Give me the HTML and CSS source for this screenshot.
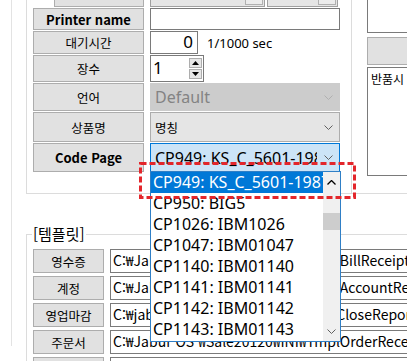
FILE: index.html
```html
<!DOCTYPE html>
<html lang="ko">
<head>
    <meta charset="UTF-8">
    <title>Printer Settings</title>
    <link rel="stylesheet" href="styles.css">
</head>
<body>
    <div class="screen">
        <div class="frame">
            <div class="top">
                <div class="upper">
                    <div class="row h-top">
                        <div class="label stub"></div>
                        <div class="pair">
                            <div class="mini-combo wide"><span class="mini-btn"></span></div>
                            <div class="mini-combo narrow"><span class="mini-btn"></span></div>
                        </div>
                    </div>
                    <div class="row h-printer">
                        <div class="label bold">Printer name</div>
                        <div class="textbox"></div>
                    </div>
                    <div class="row h-wait">
                        <div class="label">대기시간</div>
                        <div class="textbox num">0</div>
                        <span class="unit">1/1000 sec</span>
                    </div>
                    <div class="row h-count">
                        <div class="label">장수</div>
                        <div class="updown">
                            <span class="updown-value">1</span>
                            <div class="spins">
                                <span class="spin"><svg width="7" height="4" viewBox="0 0 7 4"><polygon points="0,4 3.5,0 7,4" fill="#000"/></svg></span>
                                <span class="spin"><svg width="7" height="4" viewBox="0 0 7 4"><polygon points="0,0 7,0 3.5,4" fill="#000"/></svg></span>
                            </div>
                        </div>
                    </div>
                    <div class="row h-lang">
                        <div class="label">언어</div>
                        <div class="combo disabled">
                            <span class="combo-text">Default</span>
                            <svg class="chevron" width="9" height="5" viewBox="0 0 9 5"><polyline points="0.5,0.5 4.5,4.5 8.5,0.5" fill="none" stroke="#b0b0b0" stroke-width="1"/></svg>
                        </div>
                    </div>
                    <div class="row h-name">
                        <div class="label">상품명</div>
                        <div class="combo plain">
                            <span class="combo-text">명칭</span>
                            <svg class="chevron" width="9" height="5" viewBox="0 0 9 5"><polyline points="0.5,0.5 4.5,4.5 8.5,0.5" fill="none" stroke="#606060" stroke-width="1"/></svg>
                        </div>
                    </div>
                    <div class="row h-code">
                        <div class="label bold">Code Page</div>
                        <div class="combo focused">
                            <span class="combo-text">CP949: KS_C_5601-1987</span>
                            <svg class="chevron" width="9" height="5" viewBox="0 0 9 5"><polyline points="0.5,0.5 4.5,4.5 8.5,0.5" fill="none" stroke="#606060" stroke-width="1"/></svg>
                        </div>
                    </div>
                </div>
                <div class="side">
                    <div class="side-box"></div>
                    <div class="side-btn"></div>
                    <div class="side-memo">반품시</div>
                </div>
            </div>

            <div class="template">
                <div class="legend">[템플릿]</div>
                <div class="tpl-rows">
                    <div class="tpl-row">
                        <div class="label tpl-label">영수증</div>
                        <div class="textbox path">C:₩Jabur OS ₩Sale20120₩INI₩TmplBillReceiptDesign.ini</div>
                    </div>
                    <div class="tpl-row">
                        <div class="label tpl-label">계정</div>
                        <div class="textbox path">C:₩Jabur OS ₩Sale20120₩INI₩TmplAccountReceipt.ini</div>
                    </div>
                    <div class="tpl-row">
                        <div class="label tpl-label">영업마감</div>
                        <div class="textbox path">C:₩jabur OS ₩Sale20120₩INI₩TmplCloseReport.ini</div>
                    </div>
                    <div class="tpl-row">
                        <div class="label tpl-label">주문서</div>
                        <div class="textbox path">C:₩Jabur OS ₩Sale20120₩INI₩TmplOrderReceipt.ini</div>
                    </div>
                    <div class="tpl-row">
                        <div class="label tpl-label"></div>
                        <div class="textbox path"></div>
                    </div>
                </div>
            </div>
        </div>

        <!-- open code page list -->
        <div class="dropdown">
            <div class="list">
                <div class="item selected">CP949: KS_C_5601-1987</div>
                <div class="item">CP950: BIG5</div>
                <div class="item">CP1026: IBM1026</div>
                <div class="item">CP1047: IBM01047</div>
                <div class="item">CP1140: IBM01140</div>
                <div class="item">CP1141: IBM01141</div>
                <div class="item">CP1142: IBM01142</div>
                <div class="item">CP1143: IBM01143</div>
            </div>
            <div class="scrollbar">
                <span class="sb-btn"><svg width="9" height="5" viewBox="0 0 9 5"><polyline points="0.5,4.5 4.5,0.5 8.5,4.5" fill="none" stroke="#000" stroke-width="1.3"/></svg></span>
                <span class="thumb"></span>
                <span class="sb-fill"></span>
                <span class="sb-btn"><svg width="9" height="5" viewBox="0 0 9 5"><polyline points="0.5,0.5 4.5,4.5 8.5,0.5" fill="none" stroke="#606060" stroke-width="1"/></svg></span>
            </div>
        </div>

        <!-- highlight marker -->
        <svg class="marker" width="217" height="37" viewBox="0 0 217 37">
            <rect x="1.5" y="1.5" width="214" height="34" fill="none" stroke="#e3262b" stroke-width="3" stroke-dasharray="6 3"/>
        </svg>
    </div>
</body>
</html>
```

FILE: styles.css
```css
* {
    box-sizing: border-box;
}

html, body {
    margin: 0;
}

body {
    width: 407px;
    height: 361px;
    overflow: hidden;
    background: #fff;
    color: #000;
    font-family: "Noto Sans CJK KR", "Noto Sans", sans-serif;
    font-size: 12px;
}

.screen {
    position: relative;
    display: flow-root;
    height: 361px;
    padding-left: 11px;
}

.frame {
    height: 100%;
    border-left: 1px solid #e3e3e3;
    padding-left: 14px;
}

.top {
    display: flex;
    margin-top: -15px;
}

.upper {
    flex-shrink: 0;
    display: flex;
    flex-direction: column;
    gap: 1px;
    padding: 0 11px 21px 6px;
    border-left: 1px solid #dcdcdc;
    border-right: 1px solid #dcdcdc;
    border-bottom: 1px solid #dcdcdc;
}

.row {
    display: flex;
    gap: 6px;
    align-items: stretch;
}

.h-top { height: 22px; }
.h-printer { height: 22px; }
.h-wait { height: 23px; }
.h-count { height: 27px; }
.h-lang { height: 28px; }
.h-name { height: 30px; }
.h-code { height: 29px; }

.label {
    flex-shrink: 0;
    width: 111px;
    display: flex;
    align-items: center;
    justify-content: center;
    background: #e1e1e1;
    border: 1px solid #adadad;
    font-size: 12.5px;
}

.label.bold {
    font-weight: bold;
    font-size: 13px;
}

.label.stub {
    width: 90px;
    margin-left: 21px;
}

.pair {
    display: flex;
    gap: 2px;
}

.mini-combo {
    display: flex;
    justify-content: flex-end;
    align-items: flex-end;
    padding: 0 1px 1px 0;
    background: #e5e5e5;
    border: 1px solid #a0a0a0;
}

.mini-combo.wide { width: 115px; }
.mini-combo.narrow { width: 71px; }

.mini-btn {
    width: 18px;
    height: 12px;
    border: 1px solid #b0b0b0;
    background: #ececec;
}

.textbox {
    flex-shrink: 0;
    width: 190px;
    background: #fff;
    border: 1px solid #7a7a7a;
}

.textbox.num {
    width: 48px;
    padding-right: 4px;
    text-align: right;
    font-family: "Noto Sans", sans-serif;
    font-size: 17px;
    line-height: 20px;
}

.unit {
    margin-left: 3px;
    align-self: center;
    font-family: "Noto Sans", sans-serif;
    font-size: 13px;
}

.updown {
    flex-shrink: 0;
    width: 54px;
    display: flex;
    justify-content: space-between;
    background: #fff;
    border: 1px solid #7a7a7a;
    padding: 1px 1px 1px 2px;
}

.updown-value {
    font-family: "Noto Sans", sans-serif;
    font-size: 17px;
    line-height: 22px;
}

.spins {
    display: flex;
    flex-direction: column;
    gap: 1px;
    padding-top: 1px;
}

.spin {
    width: 13px;
    height: 10px;
    display: flex;
    align-items: center;
    justify-content: center;
    background: #e6e6e6;
    border: 1px solid #adadad;
}

.combo {
    flex-shrink: 0;
    width: 190px;
    display: flex;
    align-items: center;
    justify-content: space-between;
    padding: 0 6px 0 4px;
    font-family: "Noto Sans", "Noto Sans CJK KR", sans-serif;
    font-size: 16px;
    border: 1px solid #adadad;
}

.combo-text {
    overflow: hidden;
    white-space: nowrap;
    width: 162px;
}

.combo.disabled {
    background: #cccccc;
    border-color: #cccccc;
    color: #838383;
}

.combo.plain {
    background: #e5e5e5;
    font-family: "Noto Sans CJK KR", sans-serif;
    font-size: 12.5px;
}

.combo.focused {
    background: #cce4f7;
    border-color: #0078d7;
}

.side {
    flex: 1;
    display: flex;
    flex-direction: column;
    padding-left: 15px;
    border-bottom: 1px solid #dcdcdc;
}

.side-box {
    height: 48px;
    width: 60px;
    border: 1px solid #7a7a7a;
}

.side-btn {
    height: 28px;
    width: 60px;
    margin-top: 4px;
    background: #e1e1e1;
    border: 1px solid #adadad;
}

.side-memo {
    height: 109px;
    width: 60px;
    margin-top: 2px;
    padding: 2px 3px;
    border: 1px solid #7a7a7a;
    font-size: 12px;
    white-space: nowrap;
}

.template {
    margin-top: 40px;
    border-top: 1px solid #dcdcdc;
    border-left: 1px solid #dcdcdc;
}

.legend {
    width: max-content;
    margin: -9px 0 0 5px;
    padding: 0 1px;
    background: #fff;
    font-size: 15px;
    line-height: 16px;
}

.tpl-rows {
    display: flex;
    flex-direction: column;
    gap: 3px;
    margin-top: 7px;
    padding-left: 6px;
}

.tpl-row {
    display: flex;
    gap: 6px;
    height: 24px;
}

.tpl-label {
    width: 71px;
    font-size: 12.5px;
}

.textbox.path {
    width: 400px;
    padding-left: 2px;
    white-space: nowrap;
    overflow: hidden;
    font-size: 14px;
    line-height: 21px;
}

.dropdown {
    position: absolute;
    left: 150px;
    top: 171px;
    width: 191px;
    height: 171px;
    display: flex;
    background: #fff;
    border: 1px solid #2f7fc6;
}

.list {
    flex: 1;
    overflow: hidden;
}

.item {
    height: 21px;
    padding-left: 2px;
    white-space: nowrap;
    font-family: "Noto Sans", sans-serif;
    font-size: 16px;
    line-height: 21px;
}

.item.selected {
    background: #0078d7;
    color: #fff;
}

.scrollbar {
    width: 17px;
    display: flex;
    flex-direction: column;
    background: #f0f0f0;
}

.sb-btn {
    height: 20px;
    display: flex;
    align-items: center;
    justify-content: center;
}

.thumb {
    height: 17px;
    margin-top: 21px;
    background: #cdcdcd;
}

.sb-fill {
    flex: 1;
}

.marker {
    position: absolute;
    left: 139px;
    top: 162px;
}
```
